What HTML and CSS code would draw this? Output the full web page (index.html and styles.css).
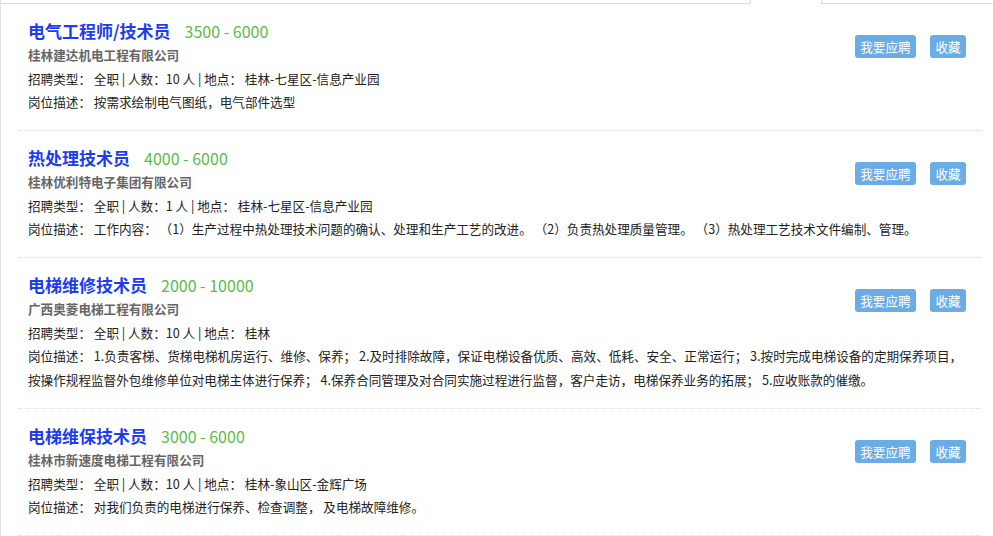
FILE: index.html
```html
<!DOCTYPE html>
<html lang="zh-CN">
<head>
<meta charset="utf-8">
<title>职位列表</title>
<link rel="stylesheet" href="styles.css">
</head>
<body>
<div class="page">
  <div class="tabs">
    <div class="tab-fill tab-left"></div>
    <div class="tab-active"></div>
    <div class="tab-fill tab-right"></div>
  </div>
  <ul class="list">
    <li class="item">
      <div class="actions"><a class="btn">我要应聘</a><a class="btn">收藏</a></div>
      <div class="title"><span class="name">电气工程师/技术员</span><span class="salary">3500 - 6000</span></div>
      <div class="company">桂林建达机电工程有限公司</div>
      <div class="meta">招聘类型： 全职 | 人数：10 人 | 地点： 桂林-七星区-信息产业园</div>
      <div class="desc">岗位描述： 按需求绘制电气图纸，电气部件选型</div>
    </li>
    <li class="item">
      <div class="actions"><a class="btn">我要应聘</a><a class="btn">收藏</a></div>
      <div class="title"><span class="name">热处理技术员</span><span class="salary">4000 - 6000</span></div>
      <div class="company">桂林优利特电子集团有限公司</div>
      <div class="meta">招聘类型： 全职 | 人数：1 人 | 地点： 桂林-七星区-信息产业园</div>
      <div class="desc">岗位描述： 工作内容： （1）生产过程中热处理技术问题的确认、处理和生产工艺的改进。 （2）负责热处理质量管理。 （3）热处理工艺技术文件编制、管理。</div>
    </li>
    <li class="item">
      <div class="actions"><a class="btn">我要应聘</a><a class="btn">收藏</a></div>
      <div class="title"><span class="name">电梯维修技术员</span><span class="salary">2000 - 10000</span></div>
      <div class="company">广西奥菱电梯工程有限公司</div>
      <div class="meta">招聘类型： 全职 | 人数：10 人 | 地点： 桂林</div>
      <div class="desc">岗位描述： 1.负责客梯、货梯电梯机房运行、维修、保养； 2.及时排除故障，保证电梯设备优质、高效、低耗、安全、正常运行； 3.按时完成电梯设备的定期保养项目，<br>按操作规程监督外包维修单位对电梯主体进行保养； 4.保养合同管理及对合同实施过程进行监督，客户走访，电梯保养业务的拓展； 5.应收账款的催缴。</div>
    </li>
    <li class="item">
      <div class="actions"><a class="btn">我要应聘</a><a class="btn">收藏</a></div>
      <div class="title"><span class="name">电梯维保技术员</span><span class="salary">3000 - 6000</span></div>
      <div class="company">桂林市新速度电梯工程有限公司</div>
      <div class="meta">招聘类型： 全职 | 人数：10 人 | 地点： 桂林-象山区-金辉广场</div>
      <div class="desc">岗位描述： 对我们负责的电梯进行保养、检查调整， 及电梯故障维修。</div>
    </li>
  </ul>
</div>
</body>
</html>
```
FILE: styles.css
```css
html, body {
  margin: 0;
  padding: 0;
  background: #fff;
}
body {
  font-family: "Microsoft YaHei", "Noto Sans CJK SC", sans-serif;
  font-size: 12.6px;
  color: #222;
}
.page {
  border-left: 1px solid #e2e2e2;
  min-height: 536px;
  box-sizing: border-box;
}
.tabs {
  display: flex;
  height: 4px;
}
.tab-fill {
  border-bottom: 1px solid #dcdcdc;
  height: 3px;
}
.tab-left {
  width: 749px;
}
.tab-active {
  width: 70px;
  height: 4px;
  border-left: 1px solid #dcdcdc;
  border-right: 1px solid #dcdcdc;
}
.tab-right {
  flex: 1;
}
.list {
  list-style: none;
  margin: 0 12px 0 17px;
  padding: 0;
}
.item {
  padding: 15px 15px 16px 10px;
  border-bottom: 1px dotted #d6d6d6;
}
.actions {
  float: right;
  margin-top: 16px;
  display: flex;
  gap: 14px;
}
.btn {
  display: block;
  height: 23px;
  line-height: 23px;
  padding: 0 5.4px;
  background: #6aade6;
  color: #fff;
  border-radius: 3px;
  font-size: 12.6px;
  cursor: pointer;
}
.title {
  line-height: 24px;
  height: 24px;
}
.name {
  font-size: 17px;
  font-weight: bold;
  color: #1c3cf2;
}
.salary {
  font-size: 16px;
  color: #5fba4a;
  margin-left: 14px;
}
.company {
  line-height: 24px;
  font-weight: bold;
  color: #666;
}
.meta {
  line-height: 23px;
}
.desc {
  line-height: 24px;
  white-space: nowrap;
}
```
